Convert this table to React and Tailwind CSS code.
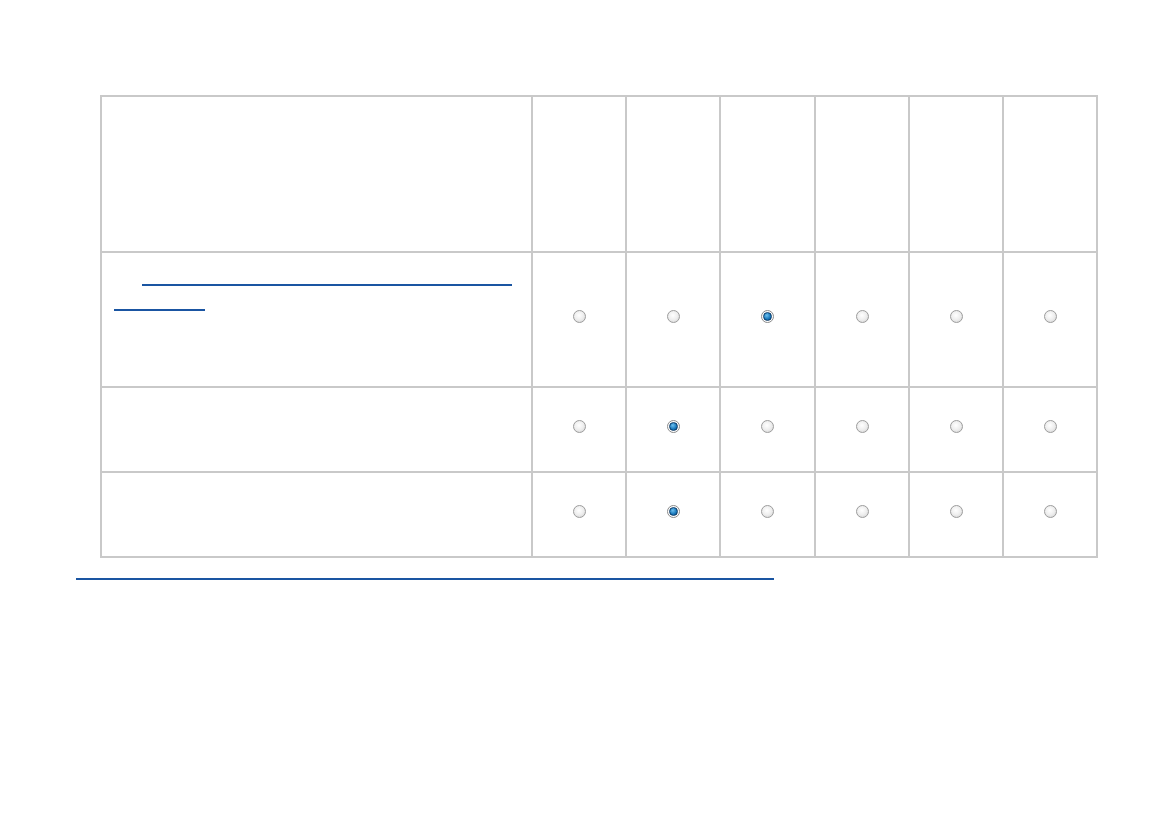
import React from "react";

const rows = [
  { h: "h-[133px]", picked: 2, link: true },
  { h: "h-[83px]", picked: 1 },
  { h: "h-[83px]", picked: 1 },
];

function Radio({ on }) {
  if (on) {
    return (
      <div className="w-[13px] h-[13px] rounded-full border border-[#8a8a8a] bg-white flex items-center justify-center">
        <div className="w-[9px] h-[9px] rounded-full border border-[#0b3a66] bg-[radial-gradient(circle_at_40%_35%,#6cc0f0,#1675b8_60%,#0d4f86)]" />
      </div>
    );
  }
  return (
    <div className="w-[13px] h-[13px] rounded-full border border-[#9c9c9c] bg-[radial-gradient(circle_at_45%_40%,#ffffff,#eeeeee_50%,#cfcfcf)]" />
  );
}

function App() {
  return (
    <div className="min-h-[827px] bg-white pt-[95px] pl-[76px] font-['Liberation_Sans',Arial,sans-serif] text-[13px]">
      <div className="ml-[24px] w-[998px] grid grid-cols-[429px_92px_92px_93px_92px_92px_92px] gap-[2px] p-[2px] bg-[#c9c9c9]">
        <div className="bg-white h-[154px]" />
        {[0, 1, 2, 3, 4, 5].map((i) => (
          <div key={i} className="bg-white h-[154px]" />
        ))}
        {rows.map((r, ri) => (
          <React.Fragment key={ri}>
            <div className={`bg-white ${r.h} pl-[12px] pt-[31px]`}>
              {r.link && (
                <div className="flex flex-col gap-[23px]">
                  <div className="ml-[28px] w-[370px] h-[2px] bg-[#1a55a2]" />
                  <div className="w-[91px] h-[2px] bg-[#1a55a2]" />
                </div>
              )}
            </div>
            {[0, 1, 2, 3, 4, 5].map((c) => (
              <div
                key={c}
                className={`bg-white ${r.h} flex items-center justify-center pb-[6px]`}
              >
                <Radio on={c === r.picked} />
              </div>
            ))}
          </React.Fragment>
        ))}
      </div>
      <div className="mt-[20px] w-[698px] h-[2px] bg-[#1a55a2]" />
    </div>
  );
}

export default App;
